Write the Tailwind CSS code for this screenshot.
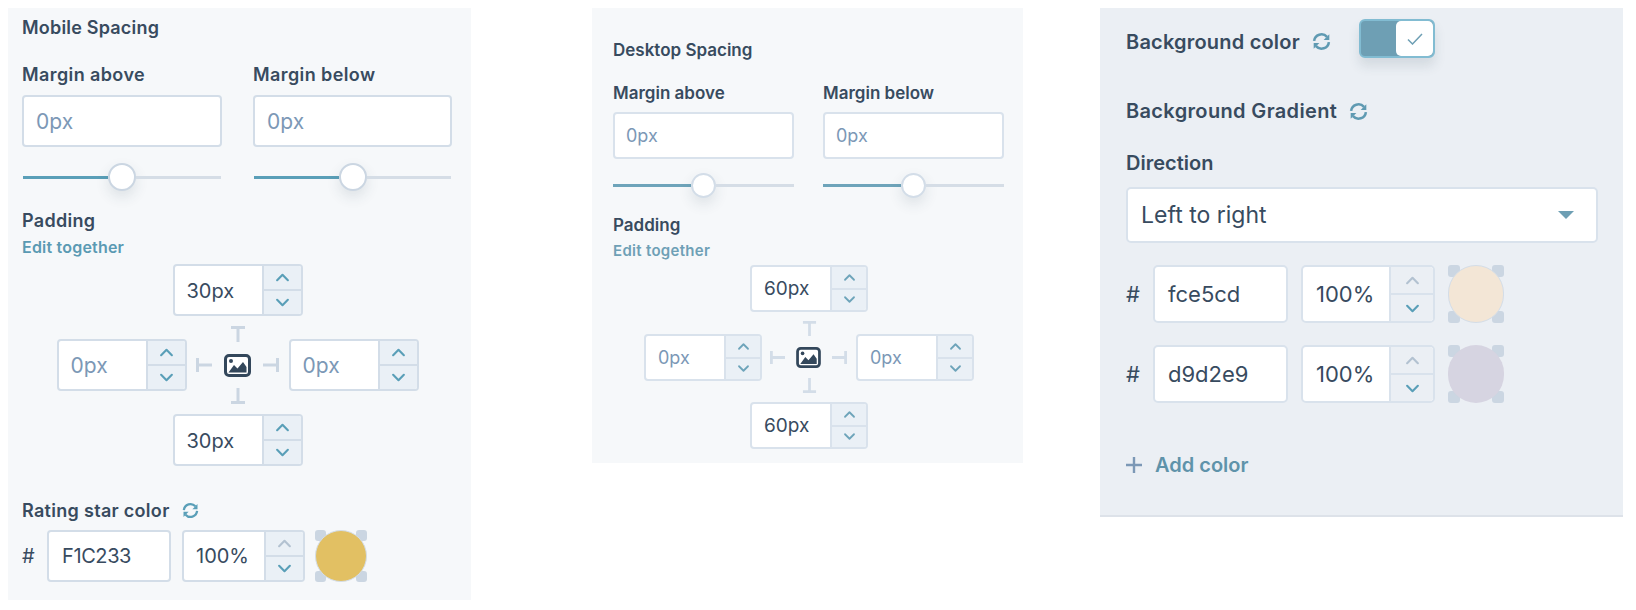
<!doctype html>
<html><head><meta charset="utf-8"><script src="https://cdn.jsdelivr.net/npm/@tailwindcss/browser@4"></script></head>
<body class="bg-white">
<svg width="0" height="0" class="absolute">
<defs>
<symbol id="up" viewBox="0 0 14 10"><path d="M2 7.5 7 2.5l5 5" fill="none" stroke="currentColor" stroke-width="2" stroke-linecap="round" stroke-linejoin="round"/></symbol>
<symbol id="down" viewBox="0 0 14 10"><path d="M2 2.5 7 7.5l5-5" fill="none" stroke="currentColor" stroke-width="2" stroke-linecap="round" stroke-linejoin="round"/></symbol>
<symbol id="sync" viewBox="0 0 18 18"><path d="M2 8.5A7 7 0 0 1 14.2 4.6" fill="none" stroke="currentColor" stroke-width="2.4"/><path d="M16.4 2.2v5.4h-5.4z" fill="currentColor"/><path d="M16 9.5A7 7 0 0 1 3.8 13.4" fill="none" stroke="currentColor" stroke-width="2.4"/><path d="M1.6 15.8v-5.4H7z" fill="currentColor"/></symbol>
<symbol id="img" viewBox="0 0 27 23"><rect x="1.5" y="1.5" width="24" height="20" rx="3.5" fill="#fff" stroke="currentColor" stroke-width="3"/><circle cx="7" cy="7" r="2" fill="currentColor"/><path d="M4.5 18.5 10 11l3.5 3.5L19 8l3.5 5v5.5z" fill="currentColor"/></symbol>
<symbol id="bt" viewBox="0 0 16 16"><path d="M1 1.5h14M8 1.5V16" fill="none" stroke="currentColor" stroke-width="3"/></symbol>
<symbol id="bb" viewBox="0 0 16 16"><path d="M1 14.5h14M8 14.5V0" fill="none" stroke="currentColor" stroke-width="3"/></symbol>
<symbol id="bl" viewBox="0 0 16 16"><path d="M1.5 1v14M1.5 8H16" fill="none" stroke="currentColor" stroke-width="3"/></symbol>
<symbol id="br" viewBox="0 0 16 16"><path d="M14.5 1v14M14.5 8H0" fill="none" stroke="currentColor" stroke-width="3"/></symbol>
</defs>
</svg>
<div class="flex items-start h-[610px] w-[1636px] overflow-hidden pt-2 pl-2 font-['Inter','Liberation_Sans',sans-serif] text-[#384b5f]">

<!-- Mobile -->
<section class="w-[463px] h-[592px] shrink-0 bg-[#f6f8fa] px-[14px] pt-2 flex flex-col">
  <h2 class="h-6 leading-6 text-[18px] font-semibold tracking-[0.2px]">Mobile Spacing</h2>
  <div class="mt-[23px] grid grid-cols-[200px_199px] gap-x-[31px]">
    <div>
      <div class="h-6 leading-6 text-[18px] font-semibold tracking-[0.4px]">Margin above</div>
      <div class="mt-2 h-[52px] bg-white border-2 border-[#d3dde8] rounded-[4px] pl-[12px] pt-px flex items-center text-[21px] text-[#7c98b6]">0px</div>
      <div class="mt-4 h-7 px-px flex items-center"><div class="h-[3px] flex-1 bg-[#5a9fb8]"></div><div class="size-7 shrink-0 rounded-full bg-white border-2 border-[#cbd6e2] shadow-[0_6px_14px_rgba(45,62,80,0.12)]"></div><div class="h-[3px] flex-1 bg-[#d5dde6]"></div></div>
    </div>
    <div>
      <div class="h-6 leading-6 text-[18px] font-semibold tracking-[0.4px]">Margin below</div>
      <div class="mt-2 h-[52px] bg-white border-2 border-[#d3dde8] rounded-[4px] pl-[12px] pt-px flex items-center text-[21px] text-[#7c98b6]">0px</div>
      <div class="mt-4 h-7 px-px flex items-center"><div class="h-[3px] flex-1 bg-[#5a9fb8]"></div><div class="size-7 shrink-0 rounded-full bg-white border-2 border-[#cbd6e2] shadow-[0_6px_14px_rgba(45,62,80,0.12)]"></div><div class="h-[3px] flex-1 bg-[#d5dde6]"></div></div>
    </div>
  </div>
  <div class="mt-[18px] h-6 leading-6 text-[18px] font-semibold tracking-[0.3px]">Padding</div>
  <div class="mt-[4px] h-5 leading-5 text-[16px] font-semibold tracking-[0.2px] text-[#5a9ab3]">Edit together</div>
  <div class="mt-[7px] w-[363px] ml-[34px] flex flex-col items-center">
    <div class="w-[130px] h-[52px] flex bg-white border-2 border-[#d3dde8] rounded-[4px] overflow-hidden text-[20px]"><div class="flex-1 pl-3 pt-px flex items-center">30px</div><div class="w-[39px] flex flex-col border-l-2 border-[#d3dde8] bg-[#eaf0f6] text-[#5a9fb8]"><div class="flex-1 flex items-center justify-center border-b-2 border-[#d3dde8]"><svg class="w-[15px] h-[11px]"><use href="#up"/></svg></div><div class="flex-1 flex items-center justify-center"><svg class="w-[15px] h-[11px]"><use href="#down"/></svg></div></div></div>
    <div class="h-[23px] shrink-0 text-[#cbd6e2]"><svg class="size-4 mt-[10px]"><use href="#bt"/></svg></div>
    <div class="flex items-center">
      <div class="w-[130px] h-[52px] flex bg-white border-2 border-[#d3dde8] rounded-[4px] overflow-hidden text-[21px] text-[#7c98b6]"><div class="flex-1 pl-3 pt-px flex items-center">0px</div><div class="w-[39px] flex flex-col border-l-2 border-[#d3dde8] bg-[#eaf0f6] text-[#5a9fb8]"><div class="flex-1 flex items-center justify-center border-b-2 border-[#d3dde8]"><svg class="w-[15px] h-[11px]"><use href="#up"/></svg></div><div class="flex-1 flex items-center justify-center"><svg class="w-[15px] h-[11px]"><use href="#down"/></svg></div></div></div>
      <svg class="size-4 ml-[9px] text-[#cbd6e2]"><use href="#bl"/></svg>
      <svg class="w-[27px] h-[23px] ml-3 text-[#33475b]"><use href="#img"/></svg>
      <svg class="size-4 ml-3 mr-[10px] text-[#cbd6e2]"><use href="#br"/></svg>
      <div class="w-[130px] h-[52px] flex bg-white border-2 border-[#d3dde8] rounded-[4px] overflow-hidden text-[21px] text-[#7c98b6]"><div class="flex-1 pl-3 pt-px flex items-center">0px</div><div class="w-[39px] flex flex-col border-l-2 border-[#d3dde8] bg-[#eaf0f6] text-[#5a9fb8]"><div class="flex-1 flex items-center justify-center border-b-2 border-[#d3dde8]"><svg class="w-[15px] h-[11px]"><use href="#up"/></svg></div><div class="flex-1 flex items-center justify-center"><svg class="w-[15px] h-[11px]"><use href="#down"/></svg></div></div></div>
    </div>
    <div class="h-[23px] shrink-0 text-[#cbd6e2]"><svg class="size-4 -mt-[3px]"><use href="#bb"/></svg></div>
    <div class="w-[130px] h-[52px] flex bg-white border-2 border-[#d3dde8] rounded-[4px] overflow-hidden text-[20px]"><div class="flex-1 pl-3 pt-px flex items-center">30px</div><div class="w-[39px] flex flex-col border-l-2 border-[#d3dde8] bg-[#eaf0f6] text-[#5a9fb8]"><div class="flex-1 flex items-center justify-center border-b-2 border-[#d3dde8]"><svg class="w-[15px] h-[11px]"><use href="#up"/></svg></div><div class="flex-1 flex items-center justify-center"><svg class="w-[15px] h-[11px]"><use href="#down"/></svg></div></div></div>
  </div>
  <div class="mt-[32px] h-6 flex items-center text-[18px] font-semibold tracking-[0.3px]">Rating star color<svg class="size-[17px] ml-3 text-[#5a9fb8]"><use href="#sync"/></svg></div>
  <div class="mt-2 h-[52px] flex items-center">
    <div class="w-[25px] text-[20px]">#</div>
    <div class="w-[124px] h-[52px] bg-white border-2 border-[#d3dde8] rounded-[4px] pl-[13px] flex items-center text-[20px] tracking-[-0.4px]">F1C233</div>
    <div class="ml-[11px] w-[123px] h-[52px] flex bg-white border-2 border-[#d3dde8] rounded-[4px] overflow-hidden text-[20px]"><div class="flex-1 pl-3 flex items-center">100%</div><div class="w-[39px] flex flex-col border-l-2 border-[#d3dde8] bg-[#eaf0f6]"><div class="flex-1 flex items-center justify-center border-b-2 border-[#d3dde8] text-[#b3c2d1]"><svg class="w-[15px] h-[11px]"><use href="#up"/></svg></div><div class="flex-1 flex items-center justify-center text-[#5a9fb8]"><svg class="w-[15px] h-[11px]"><use href="#down"/></svg></div></div></div>
    <div class="ml-[10px] relative size-[52px] grid grid-cols-[11px_11px] grid-rows-[11px_11px] justify-between content-between">
      <div class="bg-[#cbd6e2] rounded-[3px]"></div><div class="bg-[#cbd6e2] rounded-[3px]"></div><div class="bg-[#cbd6e2] rounded-[3px]"></div><div class="bg-[#cbd6e2] rounded-[3px]"></div>
      <div class="absolute inset-0 rounded-full bg-[#e2c063] border border-[#d3dde8]"></div>
    </div>
  </div>
</section>

<!-- Desktop -->
<section class="ml-[121px] w-[431px] h-[455px] shrink-0 bg-[#f6f8fa] px-[21px] pt-[30px] flex flex-col">
  <h2 class="h-6 leading-6 text-[17px] font-semibold">Desktop Spacing</h2>
  <div class="mt-[20px] grid grid-cols-[181px_181px] gap-x-[29px]">
    <div>
      <div class="h-[22px] leading-[22px] text-[17px] font-semibold">Margin above</div>
      <div class="mt-2 h-[47px] bg-white border-2 border-[#d9e2ec] rounded-[4px] pl-[11px] flex items-center text-[18px] text-[#7c98b6]">0px</div>
      <div class="mt-[14px] h-[25px] flex items-center"><div class="h-[3px] flex-1 bg-[#6ea4ba]"></div><div class="size-[25px] shrink-0 rounded-full bg-white border-2 border-[#d3dde8] shadow-[0_6px_14px_rgba(45,62,80,0.12)]"></div><div class="h-[3px] flex-1 bg-[#d5dde6]"></div></div>
    </div>
    <div>
      <div class="h-[22px] leading-[22px] text-[17px] font-semibold">Margin below</div>
      <div class="mt-2 h-[47px] bg-white border-2 border-[#d9e2ec] rounded-[4px] pl-[11px] flex items-center text-[18px] text-[#7c98b6]">0px</div>
      <div class="mt-[14px] h-[25px] flex items-center"><div class="h-[3px] flex-1 bg-[#6ea4ba]"></div><div class="size-[25px] shrink-0 rounded-full bg-white border-2 border-[#d3dde8] shadow-[0_6px_14px_rgba(45,62,80,0.12)]"></div><div class="h-[3px] flex-1 bg-[#d5dde6]"></div></div>
    </div>
  </div>
  <div class="mt-[16px] h-[22px] leading-[22px] text-[17px] font-semibold">Padding</div>
  <div class="mt-[5px] h-5 leading-5 text-[15px] font-semibold tracking-[0.3px] text-[#6ea0b6]">Edit together</div>
  <div class="mt-[4px] w-[330px] ml-[31px] flex flex-col items-center">
    <div class="w-[118px] h-[47px] flex bg-white border-2 border-[#d9e2ec] rounded-[4px] overflow-hidden text-[19px]"><div class="flex-1 pl-3 pt-px flex items-center">60px</div><div class="w-[36px] flex flex-col border-l-2 border-[#d9e2ec] bg-[#eaf0f6] text-[#6ea4ba]"><div class="flex-1 flex items-center justify-center border-b-2 border-[#d9e2ec]"><svg class="w-[13px] h-[9px]"><use href="#up"/></svg></div><div class="flex-1 flex items-center justify-center"><svg class="w-[13px] h-[9px]"><use href="#down"/></svg></div></div></div>
    <div class="h-[22px] shrink-0 text-[#d3dde8]"><svg class="size-[15px] mt-[9px]"><use href="#bt"/></svg></div>
    <div class="flex items-center">
      <div class="w-[118px] h-[47px] flex bg-white border-2 border-[#d9e2ec] rounded-[4px] overflow-hidden text-[18px] text-[#7c98b6]"><div class="flex-1 pl-3 flex items-center">0px</div><div class="w-[36px] flex flex-col border-l-2 border-[#d9e2ec] bg-[#eaf0f6] text-[#6ea4ba]"><div class="flex-1 flex items-center justify-center border-b-2 border-[#d9e2ec]"><svg class="w-[13px] h-[9px]"><use href="#up"/></svg></div><div class="flex-1 flex items-center justify-center"><svg class="w-[13px] h-[9px]"><use href="#down"/></svg></div></div></div>
      <svg class="size-[15px] ml-2 text-[#d3dde8]"><use href="#bl"/></svg>
      <svg class="w-[25px] h-[21px] ml-[11px] text-[#33475b]"><use href="#img"/></svg>
      <svg class="size-[15px] ml-[11px] mr-[9px] text-[#d3dde8]"><use href="#br"/></svg>
      <div class="w-[118px] h-[47px] flex bg-white border-2 border-[#d9e2ec] rounded-[4px] overflow-hidden text-[18px] text-[#7c98b6]"><div class="flex-1 pl-3 flex items-center">0px</div><div class="w-[36px] flex flex-col border-l-2 border-[#d9e2ec] bg-[#eaf0f6] text-[#6ea4ba]"><div class="flex-1 flex items-center justify-center border-b-2 border-[#d9e2ec]"><svg class="w-[13px] h-[9px]"><use href="#up"/></svg></div><div class="flex-1 flex items-center justify-center"><svg class="w-[13px] h-[9px]"><use href="#down"/></svg></div></div></div>
    </div>
    <div class="h-[21px] shrink-0 text-[#d3dde8]"><svg class="size-[15px] -mt-[3px]"><use href="#bb"/></svg></div>
    <div class="w-[118px] h-[47px] flex bg-white border-2 border-[#d9e2ec] rounded-[4px] overflow-hidden text-[19px]"><div class="flex-1 pl-3 pt-px flex items-center">60px</div><div class="w-[36px] flex flex-col border-l-2 border-[#d9e2ec] bg-[#eaf0f6] text-[#6ea4ba]"><div class="flex-1 flex items-center justify-center border-b-2 border-[#d9e2ec]"><svg class="w-[13px] h-[9px]"><use href="#up"/></svg></div><div class="flex-1 flex items-center justify-center"><svg class="w-[13px] h-[9px]"><use href="#down"/></svg></div></div></div>
  </div>
</section>

<!-- Background -->
<section class="ml-[77px] w-[523px] h-[509px] shrink-0 bg-[#ebeff4] border-b-2 border-[#dde2e9] pl-[26px] pr-[25px] pt-[11px] flex flex-col">
  <div class="h-[39px] flex items-center">
    <span class="w-[173px] text-[20px] font-semibold tracking-[0.2px] whitespace-nowrap pt-[6px]">Background color</span>
    <svg class="size-[19px] ml-[13px] mt-[6px] text-[#5f9ab2]"><use href="#sync"/></svg>
    <div class="ml-[28px] w-[76px] h-[39px] flex justify-end bg-[#6e9fb4] border-2 border-[#82bcd2] rounded-[6px] shadow-[0_8px_12px_rgba(45,62,80,0.12)]"><div class="w-[37px] bg-white rounded-[5px] flex items-center justify-center text-[#6e9fb4]"><svg viewBox="0 0 16 12" class="w-4 h-3"><path d="M1 6.5 5.5 11 15 1" fill="none" stroke="currentColor" stroke-width="1.5"/></svg></div></div>
  </div>
  <div class="mt-[41px] h-6 flex items-center text-[20px] font-semibold tracking-[0.35px] whitespace-nowrap"><span>Background Gradient</span><svg class="size-[19px] ml-3 text-[#5f9ab2]"><use href="#sync"/></svg></div>
  <div class="mt-[28px] h-6 leading-6 text-[20px] font-semibold">Direction</div>
  <div class="mt-[12px] h-[56px] bg-white border-2 border-[#d9e2ec] rounded-[5px] pl-[13px] pr-[22px] flex items-center justify-between text-[23px]"><span>Left to right</span><span class="w-0 h-0 border-x-[8px] border-x-transparent border-t-[8px] border-t-[#6e9fb4]"></span></div>
  <div class="mt-[22px] h-[58px] flex items-center">
    <div class="w-[27px] text-[22px]">#</div>
    <div class="w-[135px] h-[58px] bg-white border-2 border-[#d9e2ec] rounded-[5px] pl-[13px] flex items-center text-[22px]">fce5cd</div>
    <div class="ml-[13px] w-[134px] h-[58px] flex bg-white border-2 border-[#d9e2ec] rounded-[5px] overflow-hidden text-[22px]"><div class="flex-1 pl-[13px] flex items-center">100%</div><div class="w-[44px] flex flex-col border-l-2 border-[#d9e2ec] bg-[#ebeff4]"><div class="flex-1 flex items-center justify-center border-b-2 border-[#d9e2ec] text-[#b3c2d1]"><svg class="w-[15px] h-[11px]"><use href="#up"/></svg></div><div class="flex-1 flex items-center justify-center text-[#5a9fb8]"><svg class="w-[15px] h-[11px]"><use href="#down"/></svg></div></div></div>
    <div class="ml-[13px] relative w-[56px] h-[58px] grid grid-cols-[12px_12px] grid-rows-[12px_12px] justify-between content-between">
      <div class="bg-[#cbd6e2] rounded-[3px]"></div><div class="bg-[#cbd6e2] rounded-[3px]"></div><div class="bg-[#cbd6e2] rounded-[3px]"></div><div class="bg-[#cbd6e2] rounded-[3px]"></div>
      <div class="absolute inset-0 rounded-full bg-[#f3e6d6] border border-[#d3dde8]"></div>
    </div>
  </div>
  <div class="mt-[22px] h-[58px] flex items-center">
    <div class="w-[27px] text-[22px]">#</div>
    <div class="w-[135px] h-[58px] bg-white border-2 border-[#d9e2ec] rounded-[5px] pl-[13px] flex items-center text-[22px]">d9d2e9</div>
    <div class="ml-[13px] w-[134px] h-[58px] flex bg-white border-2 border-[#d9e2ec] rounded-[5px] overflow-hidden text-[22px]"><div class="flex-1 pl-[13px] flex items-center">100%</div><div class="w-[44px] flex flex-col border-l-2 border-[#d9e2ec] bg-[#ebeff4]"><div class="flex-1 flex items-center justify-center border-b-2 border-[#d9e2ec] text-[#b3c2d1]"><svg class="w-[15px] h-[11px]"><use href="#up"/></svg></div><div class="flex-1 flex items-center justify-center text-[#5a9fb8]"><svg class="w-[15px] h-[11px]"><use href="#down"/></svg></div></div></div>
    <div class="ml-[13px] relative w-[56px] h-[58px] grid grid-cols-[12px_12px] grid-rows-[12px_12px] justify-between content-between">
      <div class="bg-[#cbd6e2] rounded-[3px]"></div><div class="bg-[#cbd6e2] rounded-[3px]"></div><div class="bg-[#cbd6e2] rounded-[3px]"></div><div class="bg-[#cbd6e2] rounded-[3px]"></div>
      <div class="absolute inset-0 rounded-full bg-[#d6d4e1]"></div>
    </div>
  </div>
  <div class="mt-[48px] h-7 flex items-center text-[20px] font-semibold text-[#5f93aa]"><svg viewBox="0 0 16 16" class="size-4 mr-[13px] text-[#7c98b6]"><path d="M8 0v16M0 8h16" fill="none" stroke="currentColor" stroke-width="2.4"/></svg>Add color</div>
</section>
</div>
</body></html>
